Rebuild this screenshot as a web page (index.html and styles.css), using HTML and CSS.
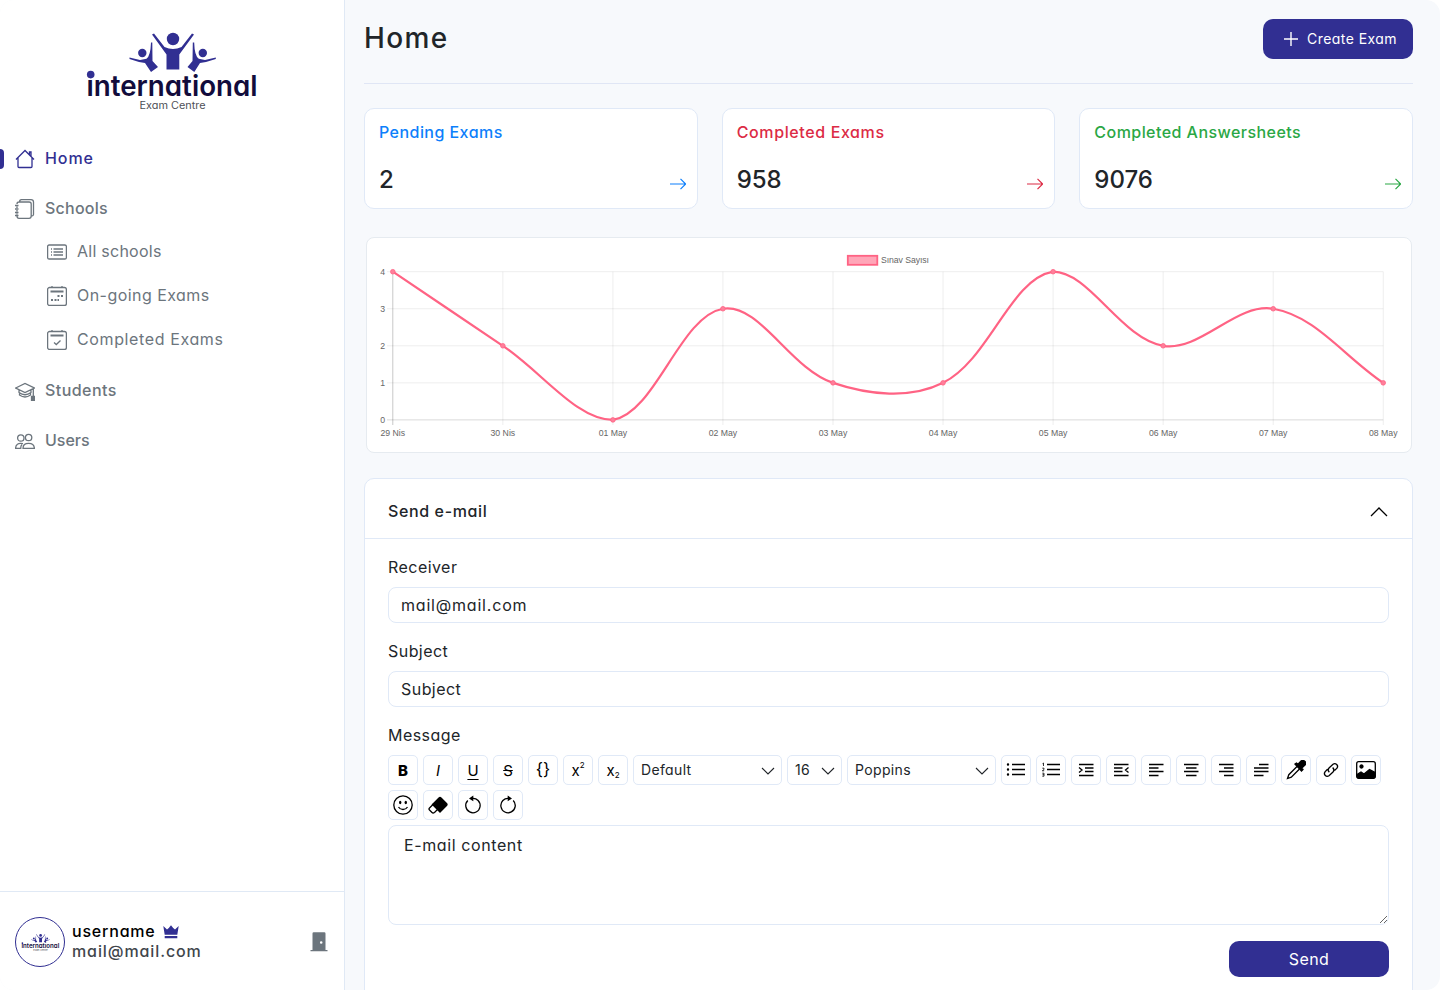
FILE: index.html
```html
<!DOCTYPE html>
<html lang="en">
<head>
    <meta charset="UTF-8">
    <meta name="viewport" content="width=device-width, initial-scale=1.0">
    <title>Home</title>
    <link rel="stylesheet" href="styles.css">
</head>
<body>

    <div class="app">
        <aside class="sidebar">
            <svg class="logo" viewBox="0 0 200 100">
                <g id="logo">
                    <g fill="#312f92">
                        <circle cx="103" cy="19" r="6.2"/>
                        <path d="M82 14.5 84 13.5 94.5 27Q103 31 111.500 27L122 13.500 124 14.500 109.300 34.500V49.500H96.500V34.500Z"/>
                        <circle cx="72.300" cy="33" r="4.200"/>
                        <path d="M59.500 37.500 70 40 76.500 38.700Q80.500 36 81 22.500H82.300L82.500 41 88 47 81 52 75 43 69 42 59.500 39Z"/>
                        <circle cx="132.800" cy="33" r="4.200"/>
                        <path d="M145.800 37.500 135 40 128.800 38.700Q124.500 36 124.200 22.500H122.800L122.500 41 117.500 47 124.300 52 130 43 136 42 145.800 39Z"/>
                    </g>
                    <text class="logo-name" x="16.500" y="75.800" textLength="171" lengthAdjust="spacingAndGlyphs">international</text>
                    <circle cx="20.700" cy="54.600" r="3.800" fill="#312f92"/>
                    <text class="logo-sub" x="69.500" y="88.500" textLength="66" lengthAdjust="spacingAndGlyphs">Exam Centre</text>
                </g>
            </svg>

            <nav class="menu">
                <a class="menu-item active">
                    <svg class="icon" viewBox="0 0 20 20"><path d="M1 10.500 10 1.500 19 10.500M3 9V17.500Q3 18.500 4 18.500H16Q17 18.500 17 17.500V9M14.500 5.500V3H16V7.500"/></svg>
                    <span>Home</span>
                </a>
                <a class="menu-item">
                    <svg class="icon" viewBox="0 0 20 20"><path d="M4.500 3Q4.500 .7 6.500 .7H16Q18.500 .7 18.500 3V15.500Q18.500 17 16.500 17M2 5V5Q2 3 4 3H14Q16.200 3 16.200 5V17Q16.200 19.300 14 19.300H4Q2 19.300 2 17M2 7.500V9M2 11V12.500M2 14.500V15.500M0 6.500H3.500M0 10H3.500M0 13.500H3.500M0 16.500H3.500"/></svg>
                    <span class="snug">Schools</span>
                </a>
                <div class="submenu">
                    <a class="menu-item">
                        <svg class="icon" viewBox="0 0 20 20"><rect x=".6" y="3" width="18.800" height="14" rx="1.500"/><path d="M6.500 7H16M6.500 10H16M6.500 13H16M4 7H5M4 10H5M4 13H5"/></svg>
                        <span class="snug">All schools</span>
                    </a>
                    <a class="menu-item">
                        <svg class="icon" viewBox="0 0 20 20"><rect x=".6" y="1.500" width="18.800" height="18" rx="2"/><path d="M5 0V2M15 0V2"/><path class="thick" d="M3.500 5.500H16.500M10.500 10H12.500M14 10H16M4 14H6M7.500 14H9.500M10.500 14H12"/></svg>
                        <span>On-going Exams</span>
                    </a>
                    <a class="menu-item">
                        <svg class="icon" viewBox="0 0 20 20"><rect x=".6" y="1.500" width="18.800" height="18" rx="2"/><path d="M5 0V2M15 0V2M7 12.500 9.300 14.500 13.500 10.500"/><path class="thick" d="M3.500 5.500H16.500"/></svg>
                        <span class="loose">Completed Exams</span>
                    </a>
                </div>
                <a class="menu-item">
                    <svg class="icon" viewBox="0 0 20 20"><path d="M.7 7 10 2.500 19.300 7 10 11.500ZM4 9V11.500Q10 16 16 11.500V9M4.500 12.500V14Q10 18 15.500 14V12M18.300 7.500V16"/><path class="filled" d="M16.500 15.500H20V19.500H16.500Z"/></svg>
                    <span>Students</span>
                </a>
                <a class="menu-item">
                    <svg class="icon" viewBox="0 0 20 20"><circle cx="13.600" cy="6.500" r="3.200"/><circle cx="5.800" cy="7" r="3.200"/><path d="M8 17.400Q8 12.300 13.600 12.300T19.400 17.400ZM8 12.700Q.6 11.300 .6 17.400H5.700Q5.700 14.700 7 13.500"/></svg>
                    <span class="tight">Users</span>
                </a>
            </nav>

            <div class="user">
                <div class="avatar"><svg viewBox="10 8 185 86"><use href="#logo"/></svg></div>
                <div class="user-info">
                    <div class="user-name"><span>username</span>
                        <svg width="16" height="14" viewBox="0 0 16 14"><path fill="#312f92" d="M.3 1 4 4.500 5.800 3 8 .2 10.200 3 12 4.500 15.700 1 14.300 9.800H1.700ZM1.700 11H14.300V13.300H1.700Z"/></svg>
                    </div>
                    <div class="user-mail">mail@mail.com</div>
                </div>
                <svg class="logout" width="18" height="20" viewBox="0 0 18 20"><path fill="#6c757d" fill-rule="evenodd" d="M2.500 18V1.500Q2.500 .3 3.700 .3H14.300Q15.500 .3 15.500 1.500V18H17.500V19.200H.5V18ZM12.500 10.500A1.300 1.300 0 1 0 9.900 10.500A1.300 1.300 0 1 0 12.500 10.500Z"/></svg>
            </div>
        </aside>

        <main class="content">
            <header class="page-header">
                <h1>Home</h1>
                <button class="btn create" type="button">
                    <svg width="14" height="14" viewBox="0 0 14 14"><path d="M7 0V14M0 7H14"/></svg>
                    <span>Create Exam</span>
                </button>
            </header>

            <section class="cards">
                <div class="card blue">
                    <h2>Pending Exams</h2>
                    <div class="card-row"><strong>2</strong><svg class="arrow" viewBox="0 0 16 12"><path d="M0 6H15.500M10.500 .8 15.700 6 10.500 11.200"/></svg></div>
                </div>
                <div class="card red">
                    <h2 class="loose">Completed Exams</h2>
                    <div class="card-row"><strong>958</strong><svg class="arrow" viewBox="0 0 16 12"><path d="M0 6H15.500M10.500 .8 15.700 6 10.500 11.200"/></svg></div>
                </div>
                <div class="card green">
                    <h2>Completed Answersheets</h2>
                    <div class="card-row"><strong>9076</strong><svg class="arrow" viewBox="0 0 16 12"><path d="M0 6H15.500M10.500 .8 15.700 6 10.500 11.200"/></svg></div>
                </div>
            </section>

            <section class="chart-box">
                <svg id="chart" width="1044" height="214" viewBox="367 238 1044 214">
                    <rect x="847.800" y="255.800" width="29.500" height="9" fill="#ffa6b8" stroke="#ff6384" stroke-width="1.800"/>
                    <text x="881" y="263.200" textLength="48">Sınav Sayısı</text>
                </svg>
            </section>

            <section class="mail">
                <div class="mail-header">
                    <h3 class="loose">Send e-mail</h3>
                    <svg width="18" height="10" viewBox="0 0 18 10"><path d="M1 9 9 1 17 9"/></svg>
                </div>
                <form class="mail-form">
                    <label for="receiver">Receiver</label>
                    <input type="text" id="receiver" value="mail@mail.com">
                    <label for="subject">Subject</label>
                    <input type="text" id="subject" value="Subject">
                    <label for="message">Message</label>
                    <div class="toolbar">
                        <button type="button" class="tool bold">B</button>
                        <button type="button" class="tool italic">I</button>
                        <button type="button" class="tool underline">U</button>
                        <button type="button" class="tool strike">S</button>
                        <button type="button" class="tool braces">{}</button>
                        <button type="button" class="tool">x<sup>2</sup></button>
                        <button type="button" class="tool">x<sub>2</sub></button>
                        <div class="select wide"><span>Default</span><svg width="14" height="8" viewBox="0 0 14 8"><path d="M1 1 7 7 13 1"/></svg></div>
                        <div class="select size"><span>16</span><svg width="14" height="8" viewBox="0 0 14 8"><path d="M1 1 7 7 13 1"/></svg></div>
                        <div class="select wide"><span>Poppins</span><svg width="14" height="8" viewBox="0 0 14 8"><path d="M1 1 7 7 13 1"/></svg></div>
                        <button type="button" class="tool"><svg viewBox="0 0 20 20"><path d="M6 4.500H19M6 9.500H19M6 14.500H19"/><path class="dots" d="M2 4.500H2M2 9.500H2M2 14.500H2"/></svg></button>
                        <button type="button" class="tool"><svg viewBox="0 0 20 20"><path d="M6 4.500H19M6 9.500H19M6 14.500H19"/><path class="thin" d="M1.500 3.700 2.500 3V6M1.300 8.200H3V9.500L1.300 10.800H3.200M1.300 13.200H3V16.200H1.300M1.500 14.700H3"/></svg></button>
                        <button type="button" class="tool"><svg viewBox="0 0 20 20"><path d="M3 4.500H17.500M9 8H17.500M9 11.500H17.500M3 15.500H17.500M3 7.500 6 10 3 12.500"/></svg></button>
                        <button type="button" class="tool"><svg viewBox="0 0 20 20"><path d="M3 4.500H17.500M3 8H11.500M3 11.500H11.500M3 15.500H17.500M17.500 7.500 14.500 10 17.500 12.500"/></svg></button>
                        <button type="button" class="tool"><svg viewBox="0 0 20 20"><path d="M3 4.500H17.500M3 8H12.500M3 11.500H17.500M3 15.500H12.500"/></svg></button>
                        <button type="button" class="tool"><svg viewBox="0 0 20 20"><path d="M3 4.500H17.500M5 8H15.500M3 11.500H17.500M5 15.500H15.500"/></svg></button>
                        <button type="button" class="tool"><svg viewBox="0 0 20 20"><path d="M3 4.500H17.500M8 8H17.500M3 11.500H17.500M8 15.500H17.500"/></svg></button>
                        <button type="button" class="tool"><svg viewBox="0 0 20 20"><path d="M8 4.500H17.500M3 8H17.500M3 11.500H17.500M3 15.500H12.500"/></svg></button>
                        <button type="button" class="tool"><svg viewBox="0 0 20 20"><path d="M11 6.500 2.800 14.700 1.500 18.500 5.300 17.200 13.500 9"/><path class="filled" d="M9 4 10.500 3 12 4.200 15 1Q17 -.5 19 1.500T19 5L15.800 8 17 9.500 15.500 11Z"/></svg></button>
                        <button type="button" class="tool"><svg viewBox="0 0 20 20"><path d="M8.300 12.300Q6 10 8 8L12 4.200Q14 3 15.700 4.500T16 8.200L13.500 10.500M11.700 7.500Q14 10 12 12L8 15.700Q6 17 4.300 15.500T4 11.800L6.500 9.300"/></svg></button>
                        <button type="button" class="tool"><svg viewBox="0 0 20 20"><rect x=".7" y="1.700" width="18.600" height="16.600" rx="2"/><path class="filled" d="M1 14.500 5 12 8 14 13.500 9.500 19 12.500V16.500Q19 18 17 18H3Q1 18 1 16Z"/><circle class="filled" cx="5.500" cy="6.500" r="1.500"/></svg></button>
                        <button type="button" class="tool"><svg viewBox="0 0 20 20"><circle cx="10" cy="10" r="9.200"/><path d="M5.500 12Q7 14.500 10 14.500T14.500 12"/><ellipse class="dot" cx="7.200" cy="7.500" rx="1.200" ry="1.700"/><ellipse class="dot" cx="12.800" cy="7.500" rx="1.200" ry="1.700"/></svg></button>
                        <button type="button" class="tool"><svg viewBox="0 0 20 20"><path d="M6 8.500 1.500 13Q.5 14 1.500 15L4 17.500Q5 18.500 6.500 17.500L10.500 13.500"/><path class="filled" d="M4.500 9.500 11 3Q12 2 13 3L18.500 8.500Q19.500 9.500 18.500 10.500L12 17Z"/></svg></button>
                        <button type="button" class="tool"><svg viewBox="0 0 20 20"><path d="M9 3.400A7.200 7.200 0 1 1 4.800 5.500"/><path class="dot" d="M6 3.400 10.300 .5V6.300Z"/></svg></button>
                        <button type="button" class="tool"><svg viewBox="0 0 20 20"><path d="M11 3.400A7.200 7.200 0 1 0 15.200 5.500"/><path class="dot" d="M14 3.400 9.700 .5V6.300Z"/></svg></button>
                    </div>
                    <textarea id="message">E-mail content</textarea>
                    <button class="btn send" type="button">Send</button>
                </form>
            </section>
        </main>
    </div>

    <script src="chart.js"></script>
</body>
</html>
```
FILE: styles.css
```css
* {
    box-sizing: border-box;
}

body {
    margin: 0;
    background-color: #fff;
    color: #212529;
    font-family: 'Inter', sans-serif;
    font-feature-settings: "cv11";
    font-size: 16px;
    letter-spacing: .45px;
    height: 990px;
    overflow: hidden;
}

h1, h2, h3 {
    margin: 0;
    font-weight: 500;
}

button, input, textarea {
    font: inherit;
    font-feature-settings: inherit;
    letter-spacing: inherit;
    color: inherit;
}

svg {
    flex: none;
    fill: none;
    letter-spacing: 0;
}

.tight {
    letter-spacing: 0;
}

.snug {
    letter-spacing: .25px;
}

.loose {
    letter-spacing: .62px;
}

.app {
    display: flex;
    height: 990px;
    background-color: #f7f9fc;
    border-radius: 14px;
    overflow: hidden;
}

/* Sidebar */
.sidebar {
    display: flex;
    flex-direction: column;
    width: 345px;
    flex: none;
    background-color: #fff;
    border-right: 1px solid #e0e9f5;
}

.logo {
    width: 200px;
    height: 100px;
    margin: 20px 0 0 70px;
    overflow: visible;
}

.logo-name {
    font-size: 28.5px;
    font-weight: 600;
    fill: #120c3c;
}

.logo-sub {
    font-size: 10px;
    fill: #4d5057;
}

.menu {
    display: flex;
    flex-direction: column;
    gap: 10px;
    padding-top: 19px;
}

.menu-item {
    display: flex;
    align-items: center;
    gap: 10px;
    height: 40px;
    padding-left: 15px;
    color: #6c757d;
    font-weight: 500;
    position: relative;
}

.menu-item span {
    padding-bottom: 2px;
}

.menu-item.active {
    color: #312f92;
}

.menu-item.active span {
    letter-spacing: .9px;
}

.menu-item.active::before {
    content: "";
    position: absolute;
    left: 0;
    top: 10px;
    width: 4px;
    height: 20px;
    border-radius: 0 4px 4px 0;
    background-color: #312f92;
}

.submenu {
    display: flex;
    flex-direction: column;
    gap: 4px;
    margin: -7px 0 -9px;
    padding-left: 32px;
}

.submenu .menu-item {
    font-weight: 400;
}

.submenu + .menu-item {
    margin-top: 10px;
}

.icon {
    width: 20px;
    height: 20px;
    stroke: currentColor;
    stroke-width: 1.3;
}

.icon .thick {
    stroke-width: 2;
}

.filled {
    fill: currentColor;
}

.user {
    display: flex;
    align-items: center;
    height: 99px;
    margin-top: auto;
    padding: 2px 16px 0 15px;
    border-top: 1px solid #e0e9f5;
}

.avatar {
    display: flex;
    align-items: center;
    justify-content: center;
    width: 50px;
    height: 50px;
    border: 1px solid #312f92;
    border-radius: 50%;
}

.avatar svg {
    width: 41px;
    height: 19px;
    overflow: visible;
}

.user-info {
    margin: -2px 0 0 7px;
    font-weight: 500;
    line-height: 20px;
    letter-spacing: .8px;
}

.user-name {
    display: flex;
    align-items: center;
    gap: 7px;
    color: #000;
}

.user-name svg {
    margin-top: 2px;
}

.user-mail {
    color: #41464c;
    letter-spacing: .9px;
}

.logout {
    margin-left: auto;
}

/* Content */
.content {
    flex: 1;
    padding: 0 27px 0 19px;
}

.page-header {
    display: flex;
    justify-content: space-between;
    height: 84px;
    padding-top: 19px;
    border-bottom: 1px solid #e0e6f5;
}

.page-header h1 {
    font-size: 28px;
    line-height: 39px;
    letter-spacing: 1.4px;
}

.btn {
    border: none;
    border-radius: 10px;
    background-color: #312f92;
    color: #fff;
}

.create {
    display: flex;
    align-items: center;
    gap: 9px;
    width: 150px;
    height: 40px;
    padding: 0 0 0 21px;
    font-size: 14px;
}

.create span {
    padding-bottom: 1px;
}

.create svg {
    stroke: #fff;
    stroke-width: 1.4;
}

.cards {
    display: grid;
    grid-template-columns: repeat(3, 1fr);
    gap: 24px;
    margin-top: 24px;
}

.card {
    height: 101px;
    padding: 11px 11px 0 14px;
    background-color: #fff;
    border: 1px solid #e0e9f7;
    border-radius: 10px;
}

.card h2 {
    font-size: 16px;
    line-height: 25px;
}

.card-row {
    display: flex;
    align-items: center;
    justify-content: space-between;
    margin-top: 17px;
    height: 36px;
}

.card strong {
    margin-top: -2px;
    color: #212529;
    font-size: 24px;
    font-weight: 500;
    letter-spacing: 0;
}

.arrow {
    width: 16px;
    height: 12px;
    margin-top: 8px;
    stroke: currentColor;
    stroke-width: 1.2;
}

.blue {
    color: #0d7ffb;
}

.red {
    color: #dc2b45;
}

.green {
    color: #2aa745;
}

.chart-box {
    height: 216px;
    margin: 28px 1px 0 2px;
    background-color: #fff;
    border: 1px solid #e6ebf0;
    border-radius: 8px;
}

.chart-box svg {
    display: block;
}

.chart-box text {
    font-family: 'Liberation Sans', sans-serif;
    font-size: 8.7px;
    fill: #666;
}

/* Mail form */
.mail {
    height: 540px;
    margin-top: 25px;
    background-color: #fff;
    border: 1px solid #e0e9f7;
    border-radius: 10px;
}

.mail-header {
    display: flex;
    align-items: center;
    justify-content: space-between;
    height: 60px;
    padding: 6px 24px 0 23px;
    border-bottom: 1px solid #e0e9f7;
}

.mail-header h3 {
    padding-bottom: 2px;
    font-size: 16px;
}

.mail-header svg {
    stroke: #000;
    stroke-width: 1.3;
}

.mail-form {
    display: flex;
    flex-direction: column;
    padding: 16px 23px 0;
}

.mail-form label {
    height: 24px;
    margin-bottom: 8px;
    line-height: 24px;
}

.mail-form input,
.mail-form textarea {
    width: 100%;
    background-color: #fff;
    border: 1px solid #e0e9f7;
    border-radius: 8px;
    outline: none;
}

.mail-form input {
    height: 36px;
    margin-bottom: 16px;
    padding: 0 12px;
}

#receiver {
    letter-spacing: .8px;
}

.mail-form textarea {
    height: 100px;
    margin-top: 5px;
    padding: 7px 15px;
    line-height: 24px;
    letter-spacing: .6px;
}

.toolbar {
    display: flex;
    flex-wrap: wrap;
    gap: 5px;
}

.tool,
.select {
    display: flex;
    align-items: center;
    height: 30px;
    background-color: #fff;
    border: 1px solid #e0e9f7;
    border-radius: 5px;
}

.tool {
    justify-content: center;
    width: 30px;
    padding: 0;
    color: #000;
    font-size: 15px;
    letter-spacing: 0;
}

.tool svg {
    width: 20px;
    height: 20px;
    stroke: #000;
    stroke-width: 1.3;
}

.tool .dots {
    stroke-width: 2.4;
    stroke-linecap: round;
}

.tool .dot {
    fill: #000;
    stroke: none;
}

.tool .thin {
    stroke-width: .8;
}

.tool sup,
.tool sub {
    font-size: 8px;
    line-height: 1;
}

.tool sup {
    margin-top: -10px;
}

.tool sub {
    margin-top: 10px;
}

.bold {
    font-weight: 800;
}

.italic {
    font-style: italic;
}

.underline {
    text-decoration: underline;
    text-decoration-thickness: 1px;
    text-underline-offset: 3px;
}

.strike {
    text-decoration: line-through;
}

.braces {
    font-size: 17px;
    padding-bottom: 2px;
}

.select {
    justify-content: space-between;
    padding: 0 6px 0 7px;
    font-size: 14px;
    letter-spacing: .35px;
}

.select span {
    padding-bottom: 1px;
}

.select svg {
    margin-top: 2px;
    stroke: #212529;
    stroke-width: 1.1;
}

.wide {
    width: 149px;
}

.size {
    width: 55px;
}

.send {
    align-self: flex-end;
    width: 160px;
    height: 36px;
    margin-top: 16px;
}
```
FILE: chart.js
```js
const labels = ['29 Nis', '30 Nis', '01 May', '02 May', '03 May', '04 May', '05 May', '06 May', '07 May', '08 May'];
const values = [4, 2, 0, 3, 1, 1, 4, 2, 3, 1];
const top_ = 271.7;
const bottom = 419.9;
const left = 392.8;
const step = 110.05;
const tension = 0.36;

const points = values.map((v, i) => ({
    x: left + i * step,
    y: bottom - v * (bottom - top_) / 4
}));

function clamp(y) {
    return Math.max(top_, Math.min(bottom, y));
}

// Control points before and after each point
const controls = points.map((p, i) => {
    const prev = points[i - 1] || p;
    const next = points[i + 1] || p;
    const d1 = Math.hypot(p.x - prev.x, p.y - prev.y);
    const d2 = Math.hypot(next.x - p.x, next.y - p.y);
    const a = tension * d1 / (d1 + d2);
    const b = tension * d2 / (d1 + d2);
    return {
        x1: p.x - a * (next.x - prev.x),
        y1: clamp(p.y - a * (next.y - prev.y)),
        x2: p.x + b * (next.x - prev.x),
        y2: clamp(p.y + b * (next.y - prev.y))
    };
});

let svg = '';
const right = points[points.length - 1].x;

for (let v = 0; v <= 4; v++) {
    const y = bottom - v * (bottom - top_) / 4;
    svg += `<path d="M387 ${y}H${right}" stroke="#000" stroke-opacity="${v ? 0.07 : 0.15}"/>`;
    svg += `<text x="385" y="${y + 3}" text-anchor="end">${v}</text>`;
}

points.forEach((p, i) => {
    svg += `<path d="M${p.x} ${top_}V425" stroke="#000" stroke-opacity="${i ? 0.07 : 0.22}"/>`;
    svg += `<text x="${p.x}" y="436" text-anchor="middle">${labels[i]}</text>`;
});

let line = `M${points[0].x} ${points[0].y}`;
for (let i = 1; i < points.length; i++) {
    line += `C${controls[i - 1].x2} ${controls[i - 1].y2} ${controls[i].x1} ${controls[i].y1} ${points[i].x} ${points[i].y}`;
}
svg += `<path d="${line}" stroke="#ff6384" stroke-width="2.2"/>`;
points.forEach(p => {
    svg += `<circle cx="${p.x}" cy="${p.y}" r="2.300" fill="#ff7f9a" stroke="#ff6384" stroke-width=".8"/>`;
});

document.getElementById('chart').innerHTML += svg;
```
